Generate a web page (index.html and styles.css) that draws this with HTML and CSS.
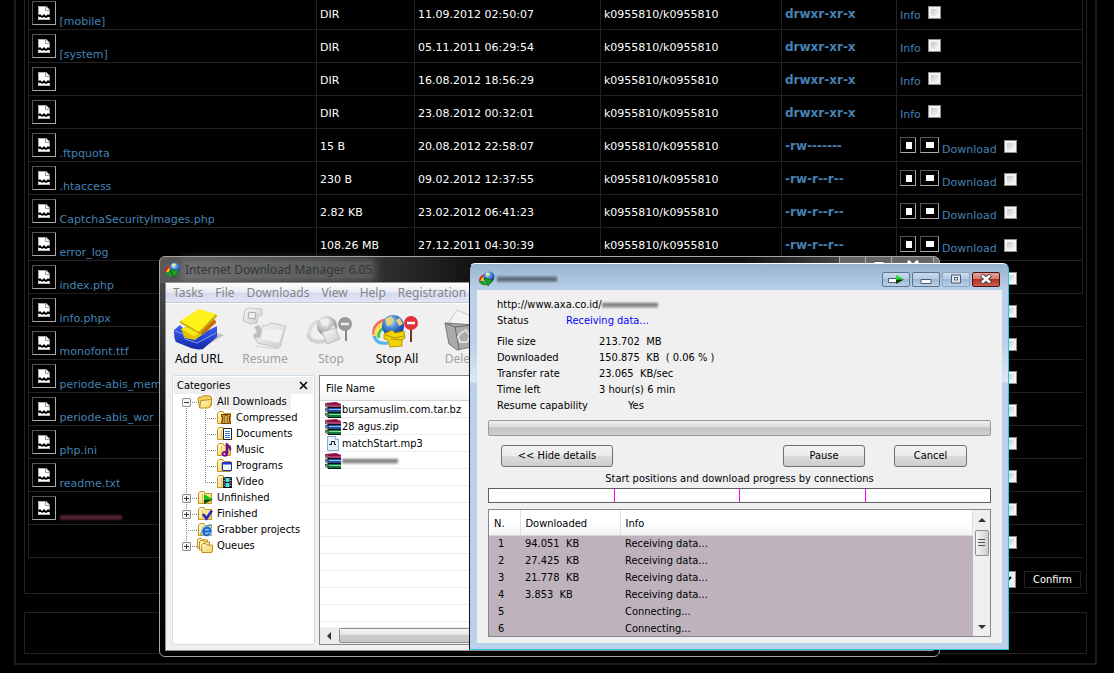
FILE: index.html
```html
<!DOCTYPE html>
<html lang="en">
<head>
  <meta charset="UTF-8">
  <meta name="viewport" content="width=device-width, initial-scale=1.0">
  <title>File Manager</title>
  <link rel="stylesheet" href="styles.css">
</head>
<body>
  <!-- shared icons -->
  <svg class="defs" aria-hidden="true">
    <defs>
      <linearGradient id="gFolder" x1="0" y1="0" x2="1" y2="1">
        <stop offset="0" stop-color="#fffbd0"/><stop offset="1" stop-color="#f3cf55"/>
      </linearGradient>
      <radialGradient id="gGlobe" cx=".4" cy=".3" r=".75">
        <stop offset="0" stop-color="#b9dcff"/><stop offset=".45" stop-color="#3f7fd6"/><stop offset="1" stop-color="#0d2a80"/>
      </radialGradient>
      <radialGradient id="gGrey" cx=".4" cy=".3" r=".75">
        <stop offset="0" stop-color="#fafafa"/><stop offset=".5" stop-color="#c2c2c2"/><stop offset="1" stop-color="#777"/>
      </radialGradient>
      <linearGradient id="gPaper" x1="0" y1="0" x2="1" y2="1">
        <stop offset="0" stop-color="#fbfbfb"/><stop offset="1" stop-color="#c9c9c9"/>
      </linearGradient>
      <linearGradient id="gTray" x1="0" y1="0" x2="0" y2="1">
        <stop offset="0" stop-color="#3d63ee"/><stop offset="1" stop-color="#1428a8"/>
      </linearGradient>
    </defs>
    <symbol id="broken" viewBox="0 0 12 14">
      <path d="M0 0h8l4 4v4l-1 1-1-1-2 2-2-2-2 2-2-2-1 1-1-1z" fill="#fff"/>
      <path d="M.5 8V.5H8L11.500 4v4" fill="none" stroke="#aaa"/>
      <path d="M7.500 0v4.500H12" fill="none" stroke="#999"/>
      <path d="M0 10l1 1h2l1 1 2-1 2 1 2-1h2v3H0z" fill="#fff"/>
      <path d="M.5 11v2.500h11V11" fill="none" stroke="#bbb"/>
    </symbol>
    <symbol id="idm" viewBox="0 0 16 16">
      <path d="M1 11a6 6 0 0 1 6-7" fill="none" stroke="#d22" stroke-width="2"/>
      <path d="M2.500 12a5 5 0 0 1 5-6" fill="none" stroke="#f5d800" stroke-width="2"/>
      <path d="M0 10c1 4 5 5 8 4l-3-4z" fill="#1c9b2b"/>
      <circle cx="10" cy="6" r="5.500" fill="url(#gGlobe)"/>
      <path d="M7 1.500l4 .5-1 2-3 1z" fill="#dff0a0"/>
      <path d="M5 7l9 2-2 2.500-3 3.500-1.500-2.500z" fill="#18a51e" stroke="#055208" stroke-width=".6"/>
    </symbol>
    <symbol id="folder" viewBox="0 0 16 16">
      <path d="M1.500 13.500v-10l1.500-2h4l1 2h6.500v10z" fill="url(#gFolder)" stroke="#c39423"/>
      <path d="M5.500 4v9.500" stroke="#e2bd5a"/>
    </symbol>
    <symbol id="folder-open" viewBox="0 0 16 16">
      <path d="M2.500 13.500l-1.500-9 1-1.500h3.500l1-1.500 7 .5 1 2v7l-2 2.500z" fill="#f5d560" stroke="#b98a1d"/>
      <path d="M2.500 14L4 6.500l11-1-1.500 6.500-2 2z" fill="url(#gFolder)" stroke="#b98a1d"/>
    </symbol>
    <symbol id="f-zip" viewBox="0 0 16 16">
      <use href="#folder"/>
      <path d="M5.500 4.500h9v2h-1v5h1v2h-9v-2h1v-5h-1z" fill="#d9971d" stroke="#6d4205"/>
      <path d="M9 5.500h2v8H9z" fill="#ffe9a0" stroke="#6d4205" stroke-width=".8"/>
    </symbol>
    <symbol id="f-doc" viewBox="0 0 16 16">
      <use href="#folder"/>
      <path d="M7.500 2.500h8v11h-8z" fill="#fff" stroke="#222"/>
      <path d="M9 5.500h5M9 7.500h5M9 9.500h5M9 11.500h5" stroke="#2f7fd0"/>
    </symbol>
    <symbol id="f-music" viewBox="0 0 16 16">
      <use href="#folder"/>
      <path d="M10 1l2 1c1 2 3 2 3 5l-1 2c0-2-1-3-2-3v6a3 2.500 0 1 1-2-2.500z" fill="#7c0d93" stroke="#4d0060" stroke-width=".5"/>
      <circle cx="8.500" cy="12" r="1" fill="#e9b3f2"/>
    </symbol>
    <symbol id="f-prog" viewBox="0 0 16 16">
      <use href="#folder"/>
      <path d="M6.500 4.500h9v8h-9z" fill="#f2f7ff" stroke="#1c2bb5"/>
      <path d="M6 5.500h10" stroke="#2636d8" stroke-width="2"/>
    </symbol>
    <symbol id="f-video" viewBox="0 0 16 16">
      <use href="#folder"/>
      <path d="M7 3h9v11H7z" fill="#111"/>
      <path d="M9.500 4h4v4h-4zM9.500 9h4v4h-4z" fill="#4fe3ea"/>
      <path d="M8.200 3.500v10M14.800 3.500v10" stroke="#fff" stroke-dasharray="1 1.500"/>
    </symbol>
    <symbol id="f-unfin" viewBox="0 0 16 16">
      <use href="#folder"/>
      <path d="M7 4l9 5.500H7z" fill="#12c81d"/><path d="M7 14l9-4.500H7z" fill="#054d08"/>
    </symbol>
    <symbol id="f-fin" viewBox="0 0 16 16">
      <use href="#folder"/>
      <path d="M6 8l3.500 4.500L15 4.500" fill="none" stroke="#2626c4" stroke-width="2.600"/>
    </symbol>
    <symbol id="f-grab" viewBox="0 0 16 16">
      <use href="#folder"/>
      <circle cx="10" cy="9" r="5.500" fill="#9ed0f5"/>
      <path d="M6 9.500h7.500c0-5-7-5-7 0s5 4 6.500 2" fill="none" stroke="#1763c9" stroke-width="2"/>
      <path d="M4 13C3 9 11 1 15 3" fill="none" stroke="#2c8fe8"/>
    </symbol>
    <symbol id="f-queue" viewBox="0 0 16 16">
      <path d="M.5 10V2l1-1.500h3l1 1.500h5V10z" fill="#fff1b0" stroke="#c08c1a"/>
      <path d="M2.500 12V4l1-1.500h3l1 1.500h5v8z" fill="#fff1b0" stroke="#c08c1a"/>
      <path d="M5 14.500l-.5-7L6 5.500h2.500l1 1.500h6v6l-1 1.500z" fill="url(#gFolder)" stroke="#c08c1a"/>
    </symbol>
    <symbol id="rar" viewBox="0 0 16 16">
      <path d="M0 1l11-1 5 2v4H4z" fill="#8e1247"/><path d="M0 1.500L4 4h12" fill="none" stroke="#d56b9b"/>
      <path d="M1 6l3-1h12v5H4z" fill="#1f4fa8"/><path d="M4 7.500h12" stroke="#8fc0f5"/>
      <path d="M1 11l3-1h12v5H4z" fill="#117a3b"/><path d="M4 12.500h12" stroke="#86dba5"/>
      <path d="M0 2l4 3v1L0 4zM0 6.500l4 3v1L0 8.500zM0 11l4 3.500v1L0 13z" fill="#fff" stroke="#111" stroke-width=".8"/>
      <path d="M3 5.500h13M3 10.500h13M3 15.500h13" stroke="#111"/>
    </symbol>
    <symbol id="mp3" viewBox="0 0 16 16">
      <path d="M2.500.5h8l3 3v11h-11z" fill="#e3f0fc" stroke="#86a9cc"/>
      <path d="M10.500.5v3h3" fill="#fff" stroke="#86a9cc"/>
      <path d="M4 8.500h2.500v-3h3v3H11" fill="none" stroke="#111"/>
    </symbol>
    <symbol id="i-add" viewBox="0 0 52 44">
      <path d="M36 24l15 4-15 9z" fill="#999" opacity=".55"/>
      <path d="M1 23l6-5 5 5h24l8-4v11L30 42c-4 1-8 0-12-1L3 35c-2-3-2-8-2-12z" fill="url(#gTray)"/>
      <path d="M2 24l8 3 2 5 12 4 19-10" fill="none" stroke="#7d9bff"/>
      <path d="M8 22l20-8 10 7-16 12-10-2z" fill="#e0c400"/>
      <path d="M8 22l20-5 10 3-17 9z" fill="#f7ea1e"/>
      <path d="M24 26l18-14 1 4-13 11z" fill="#c76a08"/>
      <path d="M26 2l17 5-17 18L7 14z" fill="#fff21a"/>
      <path d="M7 14l19 11L43 7l1 2-17 18-20-11z" fill="#c9a800"/>
    </symbol>
    <symbol id="i-resume" viewBox="0 0 52 44">
      <path d="M6 3l5-2 12 1v6l-4 1-1 7-6 1-8-3z" fill="url(#gPaper)" stroke="#c4c4c4"/>
      <path d="M10 5l7 1-1 6-7-1z" fill="#eee" stroke="#aaa"/>
      <path d="M15 20l5-2 3 5-2 8-5 2-2-5 4-3z" fill="#bcbcbc" stroke="#d9d9d9"/>
      <path d="M24 18l4 1 4-3 15 3-6 21-2 1-20-5-3-5 5-1z" fill="url(#gPaper)" stroke="#c6c6c6"/>
      <path d="M26 22l18 1-4 13-18-4z" fill="#f1f1f1"/>
      <path d="M17 39l22 3 2-2" fill="none" stroke="#d2d2d2"/>
    </symbol>
    <symbol id="i-stop" viewBox="0 0 52 44">
      <path d="M4 28c0-10 7-14 15-14" fill="none" stroke="#ddd" stroke-width="4"/>
      <path d="M3 27c1 7 9 9 17 7" fill="none" stroke="#d2d2d2" stroke-width="4"/>
      <circle cx="22" cy="19" r="10" fill="url(#gGrey)"/>
      <path d="M15 13l6-2 4 3-3 5-5-1zM25 22l4-4 2 4-4 3z" fill="#eee"/>
      <path d="M17 25l13-4 5 11-13 5z" fill="url(#gPaper)" stroke="#bbb"/>
      <path d="M41 22v12" stroke="#888" stroke-width="2"/>
      <circle cx="40" cy="17" r="7" fill="#999"/><path d="M36 17h8" stroke="#eee" stroke-width="2.500"/>
    </symbol>
    <symbol id="i-stopall" viewBox="0 0 52 44">
      <path d="M3 28C1 18 10 12 19 13" fill="none" stroke="#f3705c" stroke-width="3"/>
      <path d="M5 30C3 21 12 15 20 16" fill="none" stroke="#ffe14a" stroke-width="3"/>
      <path d="M8 31c-2-7 5-12 12-12" fill="none" stroke="#43c94e" stroke-width="3"/>
      <path d="M3 29c2 7 8 8 14 7" fill="none" stroke="#54b6e8" stroke-width="3"/>
      <circle cx="22" cy="19" r="11" fill="url(#gGlobe)"/>
      <path d="M14 12l6-3 3 4-3 5-4 1zM25 13l4-2 3 6-4 2z" fill="#e3d67a"/>
      <path d="M13 27l8-4 3 3 9-2 1 7-3 2v6l-12 1-2-7-4-1z" fill="#f2d500" stroke="#a98500" stroke-width=".8"/>
      <path d="M14 28l10 3 9-2M20 32l11 1" fill="none" stroke="#b59500"/>
      <path d="M40 22v13" stroke="#6a3a2a" stroke-width="2"/>
      <circle cx="40" cy="16" r="7" fill="#e0313c"/><path d="M36 16h8" stroke="#fff" stroke-width="2.500"/>
    </symbol>
    <symbol id="i-delete" viewBox="0 0 52 44">
      <path d="M12 15L20 3l18 8-6 10-14-3z" fill="#f4f4f4" stroke="#c8c8c8"/>
      <path d="M8 16l30 2-4 22-14 3-8-6z" fill="#aaa" stroke="#777"/>
      <path d="M8 16l10 4 4 22M18 20l20-2" fill="none" stroke="#666"/>
      <path d="M24 26l5-3 4 6-3 6h-7l-2-5z" fill="none" stroke="#ddd" stroke-width="2"/>
    </symbol>
  </svg>

  <main class="shell">
    <section class="panel">
      <table class="files">
        <colgroup>
          <col class="c-name"><col class="c-size"><col class="c-date"><col class="c-owner"><col class="c-perm"><col class="c-act">
        </colgroup>
        <tbody>
          <tr><td><svg class="ico"><use href="#broken"/></svg> <a href="#">[mobile]</a></td><td>DIR</td><td>11.09.2012 02:50:07</td><td>k0955810/k0955810</td><td><a class="perm" href="#">drwxr-xr-x</a></td><td><a href="#">Info</a> <input type="checkbox" aria-label="Select mobile"></td></tr>
          <tr><td><svg class="ico"><use href="#broken"/></svg> <a href="#">[system]</a></td><td>DIR</td><td>05.11.2011 06:29:54</td><td>k0955810/k0955810</td><td><a class="perm" href="#">drwxr-xr-x</a></td><td><a href="#">Info</a> <input type="checkbox" aria-label="Select system"></td></tr>
          <tr><td><svg class="ico"><use href="#broken"/></svg></td><td>DIR</td><td>16.08.2012 18:56:29</td><td>k0955810/k0955810</td><td><a class="perm" href="#">drwxr-xr-x</a></td><td><a href="#">Info</a> <input type="checkbox" aria-label="Select folder"></td></tr>
          <tr><td><svg class="ico"><use href="#broken"/></svg></td><td>DIR</td><td>23.08.2012 00:32:01</td><td>k0955810/k0955810</td><td><a class="perm" href="#">drwxr-xr-x</a></td><td><a href="#">Info</a> <input type="checkbox" aria-label="Select folder"></td></tr>
          <tr><td><svg class="ico"><use href="#broken"/></svg> <a href="#">.ftpquota</a></td><td>15 B</td><td>20.08.2012 22:58:07</td><td>k0955810/k0955810</td><td><a class="perm" href="#">-rw-------</a></td><td><i class="mini"></i> <i class="mini wide"></i> <a href="#">Download</a> <input type="checkbox" aria-label="Select .ftpquota"></td></tr>
          <tr><td><svg class="ico"><use href="#broken"/></svg> <a href="#">.htaccess</a></td><td>230 B</td><td>09.02.2012 12:37:55</td><td>k0955810/k0955810</td><td><a class="perm" href="#">-rw-r--r--</a></td><td><i class="mini"></i> <i class="mini wide"></i> <a href="#">Download</a> <input type="checkbox" aria-label="Select .htaccess"></td></tr>
          <tr><td><svg class="ico"><use href="#broken"/></svg> <a href="#">CaptchaSecurityImages.php</a></td><td>2.82 KB</td><td>23.02.2012 06:41:23</td><td>k0955810/k0955810</td><td><a class="perm" href="#">-rw-r--r--</a></td><td><i class="mini"></i> <i class="mini wide"></i> <a href="#">Download</a> <input type="checkbox" aria-label="Select CaptchaSecurityImages.php"></td></tr>
          <tr><td><svg class="ico"><use href="#broken"/></svg> <a href="#">error_log</a></td><td>108.26 MB</td><td>27.12.2011 04:30:39</td><td>k0955810/k0955810</td><td><a class="perm" href="#">-rw-r--r--</a></td><td><i class="mini"></i> <i class="mini wide"></i> <a href="#">Download</a> <input type="checkbox" aria-label="Select error_log"></td></tr>
          <tr><td><svg class="ico"><use href="#broken"/></svg> <a href="#">index.php</a></td><td></td><td></td><td></td><td></td><td><i class="mini"></i> <i class="mini wide"></i> <a href="#">Download</a> <input type="checkbox" aria-label="Select index.php"></td></tr>
          <tr class="open"><td><svg class="ico"><use href="#broken"/></svg> <a href="#">info.phpx</a></td><td></td><td></td><td></td><td></td><td><i class="mini"></i> <i class="mini wide"></i> <a href="#">Download</a> <input type="checkbox" aria-label="Select info.phpx"></td></tr>
          <tr class="open"><td><svg class="ico"><use href="#broken"/></svg> <a href="#">monofont.ttf</a></td><td></td><td></td><td></td><td></td><td><i class="mini"></i> <i class="mini wide"></i> <a href="#">Download</a> <input type="checkbox" aria-label="Select monofont.ttf"></td></tr>
          <tr class="open"><td><svg class="ico"><use href="#broken"/></svg> <a href="#">periode-abis_mem</a></td><td></td><td></td><td></td><td></td><td><i class="mini"></i> <i class="mini wide"></i> <a href="#">Download</a> <input type="checkbox" aria-label="Select periode-abis_mem"></td></tr>
          <tr class="open"><td><svg class="ico"><use href="#broken"/></svg> <a href="#">periode-abis_wor</a></td><td></td><td></td><td></td><td></td><td><i class="mini"></i> <i class="mini wide"></i> <a href="#">Download</a> <input type="checkbox" aria-label="Select periode-abis_wor"></td></tr>
          <tr class="open"><td><svg class="ico"><use href="#broken"/></svg> <a href="#">php.ini</a></td><td></td><td></td><td></td><td></td><td><i class="mini"></i> <i class="mini wide"></i> <a href="#">Download</a> <input type="checkbox" aria-label="Select php.ini"></td></tr>
          <tr class="open"><td><svg class="ico"><use href="#broken"/></svg> <a href="#">readme.txt</a></td><td></td><td></td><td></td><td></td><td><i class="mini"></i> <i class="mini wide"></i> <a href="#">Download</a> <input type="checkbox" aria-label="Select readme.txt"></td></tr>
          <tr class="open"><td><svg class="ico"><use href="#broken"/></svg> <span class="smear red"></span></td><td></td><td></td><td></td><td></td><td><i class="mini"></i> <i class="mini wide"></i> <a href="#">Download</a> <input type="checkbox" aria-label="Select file"></td></tr>
          <tr class="open"><td colspan="5"></td><td><i class="mini"></i> <i class="mini wide"></i> <a href="#">Download</a> <input type="checkbox" aria-label="Select all"></td></tr>
        </tbody>
      </table>
      <div class="actions">
        <select aria-label="With selected"><option></option></select>
        <button type="button" class="confirm">Confirm</button>
      </div>
    </section>
    <section class="panel empty"></section>
  </main>

  <!-- main download manager window -->
  <section class="idm">
    <header class="idm-title">
      <svg width="16" height="16"><use href="#idm"/></svg>
      <span>Internet Download Manager 6.05</span>
      <div class="idm-caption">
        <i></i><i><svg width="12" height="5"><path d="M1 4V1.500h10V4" fill="#fff" stroke="#555"/></svg></i><i class="x"><svg width="12" height="5"><path d="M1 1l3 3M11 1L8 4" stroke="#fff" stroke-width="3"/></svg></i>
      </div>
    </header>
    <div class="idm-client">
      <nav class="menu">
        <a href="#">Tasks</a><a href="#">File</a><a href="#">Downloads</a><a href="#">View</a><a href="#">Help</a><a href="#">Registration</a>
      </nav>
      <div class="toolbar">
        <button type="button"><svg><use href="#i-add"/></svg>Add URL</button>
        <button type="button" disabled><svg><use href="#i-resume"/></svg>Resume</button>
        <button type="button" disabled><svg><use href="#i-stop"/></svg>Stop</button>
        <button type="button"><svg><use href="#i-stopall"/></svg>Stop All</button>
        <button type="button" disabled><svg><use href="#i-delete"/></svg>Delete</button>
      </div>
      <div class="idm-body">
        <aside class="cats">
          <div class="cats-head">Categories <button type="button" aria-label="Close categories"><svg width="9" height="9"><path d="M1 1l7 7M8 1L1 8" stroke="#000" stroke-width="1.500"/></svg></button></div>
          <ul class="tree">
            <li class="minus"><div class="node"><svg><use href="#folder-open"/></svg><span class="sel">All Downloads</span></div>
              <ul>
                <li><div class="node"><svg><use href="#f-zip"/></svg><span>Compressed</span></div></li>
                <li><div class="node"><svg><use href="#f-doc"/></svg><span>Documents</span></div></li>
                <li><div class="node"><svg><use href="#f-music"/></svg><span>Music</span></div></li>
                <li><div class="node"><svg><use href="#f-prog"/></svg><span>Programs</span></div></li>
                <li><div class="node"><svg><use href="#f-video"/></svg><span>Video</span></div></li>
              </ul>
            </li>
            <li class="plus"><div class="node"><svg><use href="#f-unfin"/></svg><span>Unfinished</span></div></li>
            <li class="plus"><div class="node"><svg><use href="#f-fin"/></svg><span>Finished</span></div></li>
            <li><div class="node"><svg><use href="#f-grab"/></svg><span>Grabber projects</span></div></li>
            <li class="plus"><div class="node"><svg><use href="#f-queue"/></svg><span>Queues</span></div></li>
          </ul>
        </aside>
        <div class="list">
          <div class="list-head">File Name</div>
          <ul class="list-rows">
            <li><svg><use href="#rar"/></svg>bursamuslim.com.tar.bz</li>
            <li><svg><use href="#rar"/></svg>28 agus.zip</li>
            <li><svg><use href="#mp3"/></svg>matchStart.mp3</li>
            <li><svg><use href="#rar"/></svg><span class="smear"></span></li>
          </ul>
          <div class="hscroll"><i class="arrow-left"></i><i class="thumb"></i></div>
        </div>
      </div>
    </div>
  </section>

  <!-- download progress dialog -->
  <section class="dialog">
    <header class="dlg-title">
      <svg width="16" height="16"><use href="#idm"/></svg>
      <span class="smear blue"></span>
      <div class="caption">
        <button type="button" aria-label="To tray"><svg width="18" height="9"><path d="M1.500 3.500h10v4h-10z" fill="#fff" stroke="#4a5a73"/><path d="M9 0l8 4.500H9z" fill="#1fe01f"/><path d="M9 9l8-4.500H9z" fill="#063c06"/></svg></button>
        <button type="button" aria-label="Minimize"><svg width="12" height="9"><path d="M1 4.500h10v4H1z" fill="#fff" stroke="#4a5a73"/></svg></button>
        <button type="button" aria-label="Maximize" class="dim"><svg width="12" height="10"><path d="M1.500 1h9v8h-9z" fill="#dfe6ee" stroke="#4a5a73"/><path d="M4.500 3.500h3v2.500h-3z" fill="#fff" stroke="#4a5a73"/></svg></button>
        <button type="button" aria-label="Close" class="close"><svg width="12" height="10"><path d="M1.500 1l9 8M10.500 1l-9 8" stroke="#4d3b45" stroke-width="4.500"/><path d="M2 1.500l8 7M10 1.500l-8 7" stroke="#fff" stroke-width="2.500"/></svg></button>
      </div>
    </header>
    <div class="dlg-client">
      <div class="url">http://www.axa.co.id/<span class="smear"></span></div>
      <dl class="stats">
        <dt>Status</dt><dd class="status">Receiving data...</dd>
        <dt>File size</dt><dd>213.702&nbsp; MB</dd>
        <dt>Downloaded</dt><dd>150.875&nbsp; KB&nbsp; ( 0.06 % )</dd>
        <dt>Transfer rate</dt><dd>23.065&nbsp; KB/sec</dd>
        <dt>Time left</dt><dd>3 hour(s) 6 min</dd>
        <dt>Resume capability</dt><dd class="yes">Yes</dd>
      </dl>
      <div class="progress"></div>
      <div class="buttons">
        <button type="button" class="hide">&lt;&lt; Hide details</button>
        <button type="button" class="pause">Pause</button>
        <button type="button" class="cancel">Cancel</button>
      </div>
      <div class="bar-label">Start positions and download progress by connections</div>
      <div class="segments"><i></i><i></i><i></i><i></i></div>
      <div class="conns">
        <table>
          <thead><tr><th class="n">N.</th><th class="d">Downloaded</th><th>Info</th></tr></thead>
          <tbody>
            <tr><td>1</td><td>94.051&nbsp; KB</td><td>Receiving data...</td></tr>
            <tr><td>2</td><td>27.425&nbsp; KB</td><td>Receiving data...</td></tr>
            <tr><td>3</td><td>21.778&nbsp; KB</td><td>Receiving data...</td></tr>
            <tr><td>4</td><td>3.853&nbsp; KB</td><td>Receiving data...</td></tr>
            <tr><td>5</td><td></td><td>Connecting...</td></tr>
            <tr><td>6</td><td></td><td>Connecting...</td></tr>
          </tbody>
        </table>
        <div class="vscroll"><i class="up"></i><i class="thumb"></i><i class="down"></i></div>
      </div>
    </div>
  </section>
</body>
</html>
```
FILE: styles.css
```css
*, ::before {
  box-sizing: border-box;
}
body {
  margin: 0;
  background: #000;
  color: #fff;
  font: 11px/14px "DejaVu Sans", Verdana, sans-serif;
  overflow: hidden;
}
ul, dl, dd {
  margin: 0;
  padding: 0;
  list-style: none;
}
button {
  font: inherit;
  padding: 0;
}
svg {
  flex: none;
}
.defs {
  position: absolute;
  width: 0;
  height: 0;
}

/* file manager page, scrolled down a little */
.shell {
  margin: -4px 17px 0 14px;
  padding: 0 8px 9px;
  border: 2px solid #1c1c1c;
  border-top: 0;
}
.panel {
  border: 1px solid #222;
  padding: 0 3px;
}
.panel:first-child {
  border-top: 0;
}
.panel.empty {
  height: 42px;
  margin-top: 18px;
}
.files {
  width: 100%;
  table-layout: fixed;
  border-collapse: collapse;
}
.c-size { width: 98px; }
.c-date { width: 186px; }
.c-owner { width: 181px; }
.c-perm { width: 115px; }
.c-act { width: 186px; }
.files td {
  height: 33px;
  padding: 3px 3px 0;
  border: 1px solid #222;
  white-space: nowrap;
}
.files .open td:last-child {
  border-right-color: #000;
}
.files a {
  color: #4682b4;
  text-decoration: none;
}
.files .perm {
  font-size: 12px;
  font-weight: bold;
}
.ico {
  width: 24px;
  height: 24px;
  padding: 4px 5px;
  border: 1px solid;
  border-color: #555 #aaa #aaa #555;
}
.mini {
  display: inline-block;
  width: 16px;
  height: 16px;
  border: 1px solid;
  border-color: #555 #aaa #aaa #555;
  background: linear-gradient(#fff, #fff) 5px 4px / 6px 7px no-repeat;
}
.mini.wide {
  width: 19px;
  background-size: 8px 6px;
}
.files input {
  appearance: none;
  width: 13px;
  height: 13px;
  margin: 0 0 0 4px;
  padding: 2px;
  border: 1px solid #8e8f8f;
  background: linear-gradient(135deg, #c3c7ce, #f6f6f6) content-box, #f4f4f4;
}
.actions {
  display: flex;
  justify-content: flex-end;
  gap: 8px;
  padding: 13px 2px 5px;
}
.actions select {
  width: 160px;
  height: 17px;
  border: 1px solid #888;
  background: #eee;
}
.confirm {
  width: 57px;
  height: 17px;
  border: 1px solid #222;
  background: #000;
  color: #fff;
  font: 11px "DejaVu Sans Condensed", Tahoma, sans-serif;
}

/* painted over names */
.smear {
  display: inline-block;
  width: 56px;
  height: 6px;
  background: linear-gradient(transparent, #555 40%, #aaa 60%, #777 80%, transparent);
  filter: blur(1px);
}
.smear.blue {
  width: 60px;
  background: linear-gradient(#8b9db0, #4d5c6c 50%, #8090a0);
}
.smear.red {
  height: 5px;
  width: 62px;
  background: linear-gradient(#3a1522, #6b2d42 60%, #2a0e17);
}

/* manager window */
.idm {
  position: absolute;
  left: 159px;
  top: 256px;
  width: 781px;
  height: 401px;
  display: flex;
  flex-direction: column;
  padding: 0 5px 5px;
  border: 1px solid #a5a5a5;
  border-radius: 6px;
  background: linear-gradient(90deg, #5a5a5a, #2c2c2c 30%, #060606 45%, #111 75%, #777) 0 0 / 100% 26px no-repeat, linear-gradient(#555, #111 40%, #000);
  color: #000;
  font: 11px/16px "DejaVu Sans Condensed", Tahoma, sans-serif;
}
.idm-title {
  display: flex;
  align-items: center;
  gap: 4px;
  height: 25px;
  color: #2f373d;
  font: 12px/16px "Noto Sans", "Segoe UI", sans-serif;
}
.idm-title span {
  background: rgba(150, 150, 150, .4);
  box-shadow: 0 0 8px 4px rgba(150, 150, 150, .4);
}
.idm-caption {
  display: flex;
  align-self: flex-start;
  margin-left: auto;
  border-right: 1px solid #aaa;
}
.idm-caption i {
  width: 26px;
  height: 18px;
  border-left: 1px solid #aaa;
  background: #666;
  text-align: center;
  line-height: 8px;
}
.idm-caption .x {
  width: 42px;
}
.idm-client {
  flex: 1;
  display: flex;
  flex-direction: column;
  min-height: 0;
  border: 1px solid #909090;
  background: #f0f0f0;
}
.menu {
  display: flex;
  gap: 12px;
  height: 20px;
  padding: 0 7px;
  border-bottom: 1px solid #b6bccc;
  background: linear-gradient(#fff, #eaedf7 45%, #d5dbee 55%, #e1e6f6);
  font: 12px/19px "Noto Sans", "Segoe UI", sans-serif;
}
.menu a {
  color: #858585;
  text-decoration: none;
}
.toolbar {
  display: flex;
  height: 72px;
  border-top: 1px solid #fff;
  box-shadow: 0 -1px #c8c8c8;
}
.toolbar button {
  display: flex;
  flex-direction: column;
  align-items: center;
  width: 66px;
  padding-top: 3px;
  border: 0;
  background: none;
  color: #000;
  font: 12px/16px "Noto Sans", "Segoe UI", sans-serif;
}
.toolbar button:disabled {
  color: #a0a0a0;
}
.toolbar svg {
  width: 52px;
  height: 44px;
}
.idm-body {
  flex: 1;
  display: flex;
  gap: 4px;
  min-height: 0;
  padding: 0 6px 5px;
}
.cats {
  width: 143px;
  padding: 1px;
  border: 1px solid #cfdfea;
  border-radius: 3px;
  background: #fff;
}
.cats-head {
  display: flex;
  justify-content: space-between;
  align-items: center;
  height: 17px;
  padding: 0 5px 0 3px;
  background: #efefef;
}
.cats-head button {
  display: flex;
  border: 0;
  background: none;
}
.tree {
  padding-left: 12px;
  background: repeating-linear-gradient(#888 0 1px, transparent 1px 2px) 12px 8px / 1px 144px no-repeat;
}
.tree li {
  background: repeating-linear-gradient(90deg, #888 0 1px, transparent 1px 2px) 0 8px / 12px 1px no-repeat;
}
.tree .node {
  display: flex;
  align-items: center;
  height: 16px;
  padding-left: 11px;
  white-space: nowrap;
}
.node svg {
  width: 16px;
  height: 16px;
}
.node span {
  padding: 0 4px;
}
.node .sel {
  background: #f0f0f0;
}
.tree ul {
  margin-left: 19px;
  background: repeating-linear-gradient(#888 0 1px, transparent 1px 2px) 0 0 / 1px 72px no-repeat;
}
.plus > .node::before,
.minus > .node::before {
  content: "";
  width: 9px;
  height: 9px;
  margin: 0 6px 0 -15px;
  border: 1px solid #919191;
  border-radius: 1px;
  background:
    linear-gradient(#335, #335) center / 5px 1px no-repeat,
    linear-gradient(#335, #335) center / 1px 5px no-repeat,
    #f7f7f7;
}
.minus > .node::before {
  background: linear-gradient(#335, #335) center / 5px 1px no-repeat, #f7f7f7;
}
.list {
  flex: 1;
  display: flex;
  flex-direction: column;
  border: 1px solid #828790;
  background: #fff;
}
.list-head {
  height: 25px;
  padding: 5px 6px 0;
  border-bottom: 1px solid #d5d5d5;
  background: linear-gradient(#fff 45%, #f3f4f6);
}
.list-rows {
  flex: 1;
  background: repeating-linear-gradient(transparent 0 16px, #ededed 16px 17px);
}
.list-rows li {
  display: flex;
  align-items: center;
  gap: 1px;
  height: 17px;
  padding-left: 5px;
}
.list-rows svg {
  width: 16px;
  height: 16px;
}
.hscroll {
  display: flex;
  align-items: center;
  height: 17px;
  background: #ececec;
}
.arrow-left {
  margin: 0 8px 0 7px;
  border: 4px solid transparent;
  border-left: 0;
  border-right-color: #333;
}
.thumb {
  border: 1px solid #8f8f8f;
  border-radius: 2px;
}
.hscroll .thumb {
  flex: 1;
  height: 15px;
  background: linear-gradient(#f5f5f5, #e4e4e4 45%, #cacaca 50%, #c8c8c8);
}

/* progress dialog */
.dialog {
  position: absolute;
  left: 469px;
  top: 263px;
  width: 540px;
  height: 387px;
  display: flex;
  flex-direction: column;
  padding: 0 6px 6px 7px;
  border: 1px solid #2fc6dc;
  border-color: #fff #2fc6dc #2fc6dc #111;
  border-radius: 6px 6px 0 0;
  background: linear-gradient(#98b3cf, #b9d1ea 26px, #b9d1ea 80px, #dbe8f5 118px, #b9d1ea 119px);
  color: #000;
  font: 11px/16px "DejaVu Sans Condensed", Tahoma, sans-serif;
}
.dlg-title {
  display: flex;
  align-items: center;
  gap: 2px;
  height: 26px;
  padding: 4px 2px 0;
}
.caption {
  display: flex;
  gap: 2px;
  margin-left: auto;
}
.caption button {
  display: flex;
  align-items: center;
  justify-content: center;
  width: 28px;
  height: 15px;
  border: 1px solid #5f738c;
  border-radius: 2px;
  background: linear-gradient(#c9dbee, #b4cbe3 45%, #9fb9d6 50%, #b9d1ea);
}
.caption .dim {
  border-color: #8fa5c0;
}
.caption .close {
  border-color: #4c1017;
  background: linear-gradient(#e3a39a, #d27c70 45%, #b43222 50%, #c8604a);
}
.dlg-client {
  flex: 1;
  padding: 7px 11px 5px;
  background: #f0f0f0;
}
.url {
  padding-left: 9px;
}
.stats {
  display: grid;
  grid-template-columns: 102px 1fr;
  padding-left: 9px;
}
.stats .status {
  margin: 0 0 5px -33px;
  color: #00f;
}
.stats .yes {
  padding-left: 29px;
}
.progress {
  height: 16px;
  margin-top: 6px;
  border: 1px solid #999;
  border-radius: 2px;
  background: linear-gradient(#f0f0f0, #dcdcdc 40%, #c3c3c3 50%, #cfcfcf);
}
.buttons {
  display: flex;
  padding: 9px 24px 4px 13px;
}
.buttons button {
  height: 22px;
  border: 1px solid #707070;
  border-radius: 3px;
  background: linear-gradient(#f3f3f3, #ebebeb 50%, #dcdcdc 50%, #cdcdcd);
  color: #000;
}
.hide {
  width: 112px;
}
.pause {
  width: 82px;
  margin: 0 29px 0 auto;
}
.cancel {
  width: 73px;
}
.bar-label {
  text-align: center;
}
.segments {
  display: flex;
  height: 15px;
  margin-top: 1px;
  border: 1px solid #606060;
  background: #fff;
}
.segments i {
  flex: 1;
}
.segments i + i {
  border-left: 1px solid #f0f;
}
.conns {
  display: flex;
  height: 128px;
  margin-top: 6px;
  border: 1px solid #828790;
  background: #beb3bc;
}
.conns table {
  flex: 1;
  table-layout: fixed;
  border-collapse: collapse;
  align-self: flex-start;
}
.conns th {
  height: 25px;
  padding: 3px 5px 0;
  border-right: 1px solid #e0e0e0;
  border-bottom: 1px solid #d5d5d5;
  background: linear-gradient(#fff 45%, #f3f4f6);
  font-weight: normal;
  text-align: left;
}
.conns .n {
  width: 31px;
}
.conns .d {
  width: 100px;
}
.conns td {
  height: 17px;
  padding: 0 5px;
}
.conns td:first-child {
  padding-left: 9px;
}
.vscroll {
  display: flex;
  flex-direction: column;
  align-items: center;
  width: 17px;
  background: #efefef;
}
.vscroll .thumb {
  width: 14px;
  height: 26px;
  background:
    repeating-linear-gradient(#555 0 1px, transparent 1px 3px) center / 7px 8px no-repeat,
    linear-gradient(90deg, #f5f5f5, #d0d0d0);
}
.up {
  margin: 8px 0;
  border: 4px solid transparent;
  border-top: 0;
  border-bottom-color: #333;
}
.down {
  margin: auto 0 7px;
  border: 4px solid transparent;
  border-bottom: 0;
  border-top-color: #333;
}
```
